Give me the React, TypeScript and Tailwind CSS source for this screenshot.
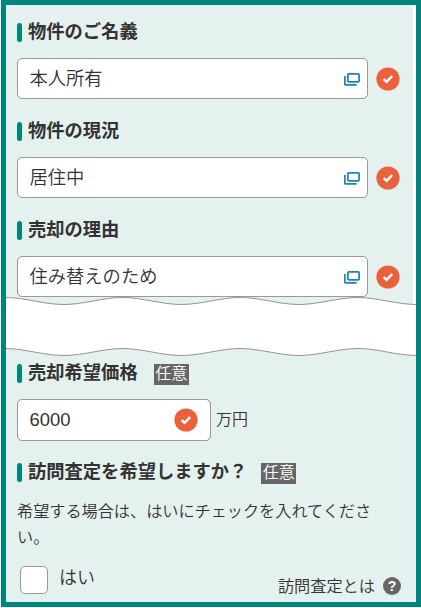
import type { ReactNode } from "react";

const selects = [
  { label: "物件のご名義", value: "本人所有" },
  { label: "物件の現況", value: "居住中" },
  { label: "売却の理由", value: "住み替えのため" },
];

function CheckMark() {
  return (
    <svg viewBox="0 0 24 24" className="h-6 w-6 shrink-0">
      <circle cx="12" cy="12" r="11.6" fill="#eb613b" />
      <path d="M7.6 12.1l3 2.7 5.6-5.8" fill="none" stroke="#fff" strokeWidth="2.5" />
    </svg>
  );
}

function WindowIcon() {
  return (
    <svg viewBox="0 0 16 13" className="mt-px h-[13px] w-4 shrink-0" fill="none" stroke="#1b82bd" strokeWidth="1.7">
      <rect x="3.9" y="0.9" width="11.2" height="7.9" rx="0.8" />
      <path d="M0.9 3v8.2q0 0.7 0.7 0.7H12.6" />
    </svg>
  );
}

function Optional() {
  return (
    <span className="mt-0.5 h-[21px] w-[35px] bg-[#666] text-center text-[16px] leading-5 font-[350] whitespace-nowrap text-white">
      任意
    </span>
  );
}

function Heading({ children }: { children: ReactNode }) {
  return (
    <div className="flex h-5 items-center">
      <span className="h-[19px] w-[5px] rounded-full bg-[#00857a]" />
      <h2 className="ml-1.5 text-[18.3px] leading-5 font-bold whitespace-nowrap">{children}</h2>
    </div>
  );
}

function Waves() {
  const wave = "c20 0 38.8 7 58.8 7s38.8 -7 58.8 -7";
  const half = "c20 0 38.8 7 58.8 7";
  return (
    <svg viewBox="0 0 410 60" className="block h-[60px] w-[410px]">
      <rect width="410" height="60" fill="#fff" />
      <path d={`M-1 0.5${wave}${wave}${wave}${half}V0H-1Z`} fill="#e5f1ef" />
      <rect x="407" width="3" height="7" fill="#fff" />
      <path d={`M-1 51.5${wave}${wave}${wave}${half}V60H-1Z`} fill="#e5f1ef" />
      <path d={`M-1 0.5${wave}${wave}${wave}${half}`} fill="none" stroke="#888" strokeWidth="0.9" />
      <path d={`M-1 51.5${wave}${wave}${wave}${half}`} fill="none" stroke="#888" strokeWidth="0.9" />
    </svg>
  );
}

export default function App() {
  return (
    <div className="h-[608px] w-[421px] bg-white pb-px pl-px font-['Liberation_Sans','Noto_Sans_CJK_JP',sans-serif] font-[350] text-[#333]">
      <div className="flex h-[607px] flex-col overflow-hidden border-5 border-[#00857d] bg-white">
        <section className="mr-[3px] flex h-[292px] shrink-0 flex-col gap-[22.2px] rounded-tr-md bg-[#e5f1ef] pt-[17px] pl-[11px]">
          {selects.map((item) => (
            <div key={item.label} className="flex h-[77px] shrink-0 flex-col justify-between">
              <Heading>{item.label}</Heading>
              <div className="flex items-center">
                <div className="flex h-[41px] w-[351px] items-center justify-between rounded-[5px] border border-[#999] bg-white pr-[7px] pl-[11.5px]">
                  <span className="text-[18.3px] leading-6">{item.value}</span>
                  <WindowIcon />
                </div>
                <div className="mt-px ml-2">
                  <CheckMark />
                </div>
              </div>
            </div>
          ))}
        </section>

        <Waves />

        <section className="flex flex-1 flex-col bg-[#e5f1ef] pt-[6px] pl-[11px]">
          <div className="flex h-5 items-center gap-4">
            <Heading>売却希望価格</Heading>
            <Optional />
          </div>
          <div className="mt-4 flex items-center">
            <div className="flex h-[42px] w-[194px] items-center justify-between rounded-[5px] border border-[#999] bg-white pr-3 pl-[11.5px]">
              <span className="text-[18.4px] leading-6 font-normal">6000</span>
              <CheckMark />
            </div>
            <span className="ml-[5px] text-[16px] leading-6">万円</span>
          </div>

          <div className="mt-[21px] flex h-5 items-center gap-3.5">
            <Heading>訪問査定を希望しますか？</Heading>
            <Optional />
          </div>
          <p className="mt-[17px] w-[372px] text-[16.15px] leading-[25.5px]">
            希望する場合は、はいにチェックを入れてください。
          </p>

          <div className="mt-4 flex items-start">
            <span className="ml-[3px] h-7 w-7 shrink-0 rounded-[5px] border border-[#999] bg-white" />
            <span className="ml-[11px] text-[18px] leading-6">はい</span>
            <div className="mt-2 mr-[15px] ml-auto flex items-center gap-2">
              <span className="text-[16.2px] leading-6">訪問査定とは</span>
              <span className="flex h-[18px] w-[18px] items-center justify-center rounded-full bg-[#666] text-[14px] leading-none font-bold text-white">
                ?
              </span>
            </div>
          </div>
        </section>
      </div>
    </div>
  );
}
